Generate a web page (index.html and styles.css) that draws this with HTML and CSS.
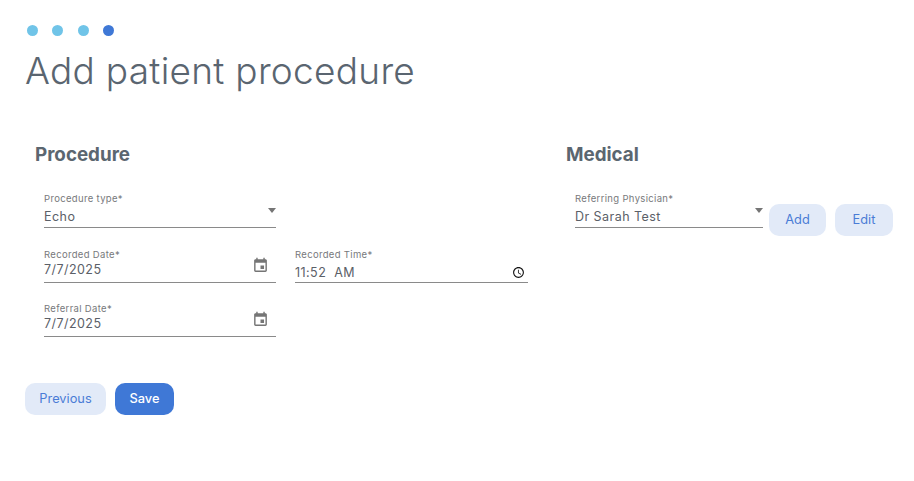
FILE: index.html
```html
<!DOCTYPE html>
<html lang="en">
<head>
<meta charset="utf-8">
<title>Add patient procedure</title>
<link rel="stylesheet" href="styles.css">
</head>
<body>
<main class="page">
  <div class="stepper">
    <span class="dot"></span>
    <span class="dot"></span>
    <span class="dot"></span>
    <span class="dot dot-active"></span>
  </div>
  <h1 class="title">Add patient procedure</h1>
  <div class="sections">
    <section class="section section-procedure">
      <h2 class="section-title">Procedure</h2>
      <div class="field-grid">
        <div class="field field-select">
          <label class="field-label">Procedure type*</label>
          <div class="field-control"><span class="field-value">Echo</span><span class="caret"></span></div>
        </div>
        <div class="spacer"></div>
        <div class="field field-date">
          <label class="field-label">Recorded Date*</label>
          <div class="field-control"><span class="field-value">7/7/2025</span>
            <svg class="icon icon-cal" viewBox="0 0 24 24"><path fill="#757575" d="M17 12h-5v5h5v-5zM16 1v2H8V1H6v2H5c-1.11 0-1.99.9-1.99 2L3 19c0 1.1.89 2 2 2h14c1.1 0 2-.9 2-2V5c0-1.1-.9-2-2-2h-1V1h-2zm3 18H5V8h14v11z"/></svg>
          </div>
        </div>
        <div class="field field-time">
          <label class="field-label">Recorded Time*</label>
          <div class="field-control"><span class="field-value">11:52&nbsp; AM</span>
            <svg class="icon icon-clock" viewBox="0 0 24 24"><path fill="#111" d="M11.99 2C6.47 2 2 6.48 2 12s4.47 10 9.99 10C17.52 22 22 17.52 22 12S17.52 2 11.99 2zM12 20c-4.42 0-8-3.58-8-8s3.58-8 8-8 8 3.58 8 8-3.58 8-8 8zm.5-13H11v6l5.25 3.15.75-1.23-4.5-2.67z"/></svg>
          </div>
        </div>
        <div class="field field-date">
          <label class="field-label">Referral Date*</label>
          <div class="field-control"><span class="field-value">7/7/2025</span>
            <svg class="icon icon-cal" viewBox="0 0 24 24"><path fill="#757575" d="M17 12h-5v5h5v-5zM16 1v2H8V1H6v2H5c-1.11 0-1.99.9-1.99 2L3 19c0 1.1.89 2 2 2h14c1.1 0 2-.9 2-2V5c0-1.1-.9-2-2-2h-1V1h-2zm3 18H5V8h14v11z"/></svg>
          </div>
        </div>
      </div>
    </section>
    <section class="section section-medical">
      <h2 class="section-title">Medical</h2>
      <div class="physician-row">
        <div class="field field-select field-physician">
          <label class="field-label">Referring Physician*</label>
          <div class="field-control"><span class="field-value">Dr Sarah Test</span><span class="caret"></span></div>
        </div>
        <button class="btn btn-soft btn-add" type="button">Add</button>
        <button class="btn btn-soft btn-edit" type="button">Edit</button>
      </div>
    </section>
  </div>
  <div class="actions">
    <button class="btn btn-soft btn-prev" type="button">Previous</button>
    <button class="btn btn-primary btn-save" type="button">Save</button>
  </div>
</main>
</body>
</html>
```

FILE: styles.css
```css
* { box-sizing: border-box; }
html, body { margin: 0; padding: 0; background: #fff; }
body { font-family: Inter, "Liberation Sans", sans-serif; color: #5b6670; }
.page { width: 914px; height: 481px; padding: 25px 0 0 25px; overflow: hidden; }

.stepper { display: flex; gap: 14.3px; padding-left: 2px; height: 11px; }
.dot { width: 11px; height: 11px; border-radius: 50%; background: #70c4e8; }
.dot-active { background: #3f78d6; }

.title { margin: 10px 0 0; font-size: 37px; line-height: 50px; font-weight: 300; color: #5a6570; letter-spacing: 0.28px; }

.sections { display: flex; margin-top: 46px; }
.section-procedure { width: 541px; padding-left: 10px; }
.section-medical { width: 340px; }
.section-title { margin: 0; font-size: 18.8px; line-height: 26px; font-weight: 700; color: #5b6670; }

.field-grid { display: grid; grid-template-columns: 232px 233px; grid-template-rows: 38px 36px 36px; column-gap: 19px; row-gap: 18px; margin: 23px 0 0 9px; }
.field { display: flex; flex-direction: column; padding-top: 1px; border-bottom: 1px solid #8a8a8a; }
.field-select { height: 37px; }
.field-date, .field-time { height: 36px; }
.field-label { font-size: 9.5px; line-height: 14px; color: #77797c; letter-spacing: 0.33px; }
.field-control { display: flex; align-items: flex-start; justify-content: space-between; position: relative; }
.field-select .field-control, .field-time .field-control { margin-top: 2px; }
.field-date .field-control { margin-top: -1px; }
.field-value { font-size: 12.5px; line-height: 18px; color: #5b6068; letter-spacing: 0.45px; }
.caret { position: absolute; right: 0; top: 0; width: 0; height: 0; border-left: 4.5px solid transparent; border-right: 4.5px solid transparent; border-top: 5px solid #757575; }
.icon { display: block; flex: none; }
.icon-cal { width: 17px; height: 17px; margin: -4.5px 7.5px 0 0; }
.icon-clock { width: 13px; height: 13px; margin: 2px 3px 0 0; }

.physician-row { display: flex; align-items: flex-start; margin: 23px 0 0 9px; }
.field-physician { width: 188px; }

.btn { border: 0; font-family: inherit; font-size: 12.8px; border-radius: 10px; height: 32px; padding: 0 0 2px; }
.btn-soft { background: #e2eaf8; color: #4a7cd6; }
.btn-primary { background: #3f78d6; color: #fff; font-weight: 500; }
.btn-add { width: 57px; margin: 13px 0 0 6px; }
.btn-edit { width: 58px; margin: 13px 0 0 9px; }

.actions { display: flex; gap: 9px; margin-top: 46px; }
.btn-prev { width: 81px; }
.btn-save { width: 59px; }
```
